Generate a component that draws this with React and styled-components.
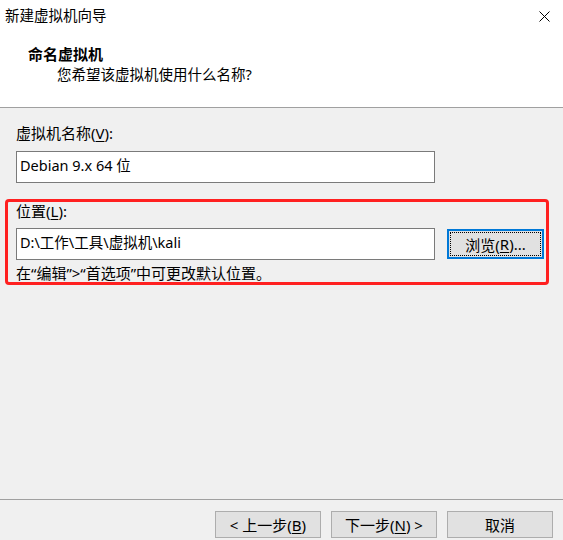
import React from "react";
import styled, { createGlobalStyle } from "styled-components";

const Global = createGlobalStyle`
  html, body { margin: 0; padding: 0; }
  body {
    background: #f0f0f0;
    font-family: "Noto Sans", "Noto Sans CJK SC", sans-serif;
    color: #000;
  }
  * { box-sizing: border-box; }
`;

const Window = styled.div`
  width: 563px;
  height: 540px;
  display: flex;
  flex-direction: column;
  background: #f0f0f0;
  overflow: hidden;
`;

const Header = styled.div`
  height: 108px;
  background: #fff;
  border-bottom: 1px solid #a0a0a0;
  display: flex;
  flex-direction: column;
  flex-shrink: 0;
`;

const TitleBar = styled.div`
  height: 32px;
  display: flex;
  align-items: center;
  justify-content: space-between;
  padding-left: 5px;
`;

const TitleText = styled.span`
  font-size: 14.5px;
  line-height: 20px;
  margin-top: -3px;
`;

const CloseButton = styled.div`
  width: 38px;
  height: 32px;
  display: flex;
  align-items: center;
  justify-content: center;
`;

const Heading = styled.div`
  margin-top: 12px;
  padding-left: 28px;
  font-size: 15px;
  font-weight: 700;
  line-height: 20px;
`;

const SubHeading = styled.div`
  padding-left: 57px;
  font-size: 14.5px;
  line-height: 20px;
`;

const Content = styled.div`
  flex: 1;
  display: flex;
  flex-direction: column;
  padding: 15px 16px 0 16px;
`;

const Label = styled.div`
  font-size: 15px;
  line-height: 20px;
  margin-top: ${(p) => p.$top || 0}px;
`;

const TextBox = styled.div`
  width: 419px;
  height: 32px;
  background: #fff;
  border: 1px solid #7a7a7a;
  padding: 2px 3px;
  font-size: 14.5px;
  line-height: 22px;
  margin-top: ${(p) => p.$top || 0}px;
  flex-shrink: 0;
`;

const Highlight = styled.div`
  margin: 16px -2px 0 -11px;
  border: 3px solid #ff2020;
  border-radius: 4px;
  padding: 0 2px 0 8px;
  display: flex;
  flex-direction: column;
  height: 86px;
`;

const Row = styled.div`
  display: flex;
  align-items: flex-start;
  gap: 12px;
  margin-top: 7px;
`;

const BrowseButton = styled.div`
  position: relative;
  width: 98px;
  height: 30px;
  margin-top: 1px;
  background: #e1e1e1;
  border: 2px solid #0078d7;
  font-size: 15px;
  display: flex;
  align-items: center;
  justify-content: center;
  &::after {
    content: "";
    position: absolute;
    inset: 1px;
    border: 1px dotted #000;
  }
`;

const Hint = styled.div`
  font-size: 15px;
  line-height: 20px;
  margin-top: 3px;
`;

const Footer = styled.div`
  flex-shrink: 0;
  height: 41px;
  border-top: 1px solid #a0a0a0;
  display: flex;
  justify-content: flex-end;
  align-items: flex-start;
  gap: 10px;
  padding: 11px 10px 0 0;
`;

const Button = styled.div`
  width: 106px;
  height: 27px;
  background: #e1e1e1;
  border: 1px solid #adadad;
  font-size: 15px;
  display: flex;
  align-items: center;
  justify-content: center;
  white-space: pre;
`;

const U = styled.span`
  text-decoration: underline;
  text-underline-offset: 2px;
`;

export default function App() {
  return (
    <Window>
      <Global />
      <Header>
        <TitleBar>
          <TitleText>新建虚拟机向导</TitleText>
          <CloseButton>
            <svg width="11" height="11" viewBox="0 0 11 11">
              <path d="M0.5 0.5L10.5 10.5M10.5 0.5L0.5 10.5" stroke="#000" strokeWidth="1" fill="none" />
            </svg>
          </CloseButton>
        </TitleBar>
        <Heading>命名虚拟机</Heading>
        <SubHeading>您希望该虚拟机使用什么名称?</SubHeading>
      </Header>
      <Content>
        <Label>
          虚拟机名称(<U>V</U>):
        </Label>
        <TextBox $top={8}>Debian 9.x 64 位</TextBox>
        <Highlight>
          <Label $top={-1}>
            位置(<U>L</U>):
          </Label>
          <Row>
            <TextBox>D:\工作\工具\虚拟机\kali</TextBox>
            <BrowseButton>
              浏览(<U>R</U>)...
            </BrowseButton>
          </Row>
          <Hint>在“编辑”&gt;“首选项”中可更改默认位置。</Hint>
        </Highlight>
      </Content>
      <Footer>
        <Button>
          {"< 上一步("}<U>B</U>)
        </Button>
        <Button>
          下一步(<U>N</U>){" >"}
        </Button>
        <Button>取消</Button>
      </Footer>
    </Window>
  );
}
